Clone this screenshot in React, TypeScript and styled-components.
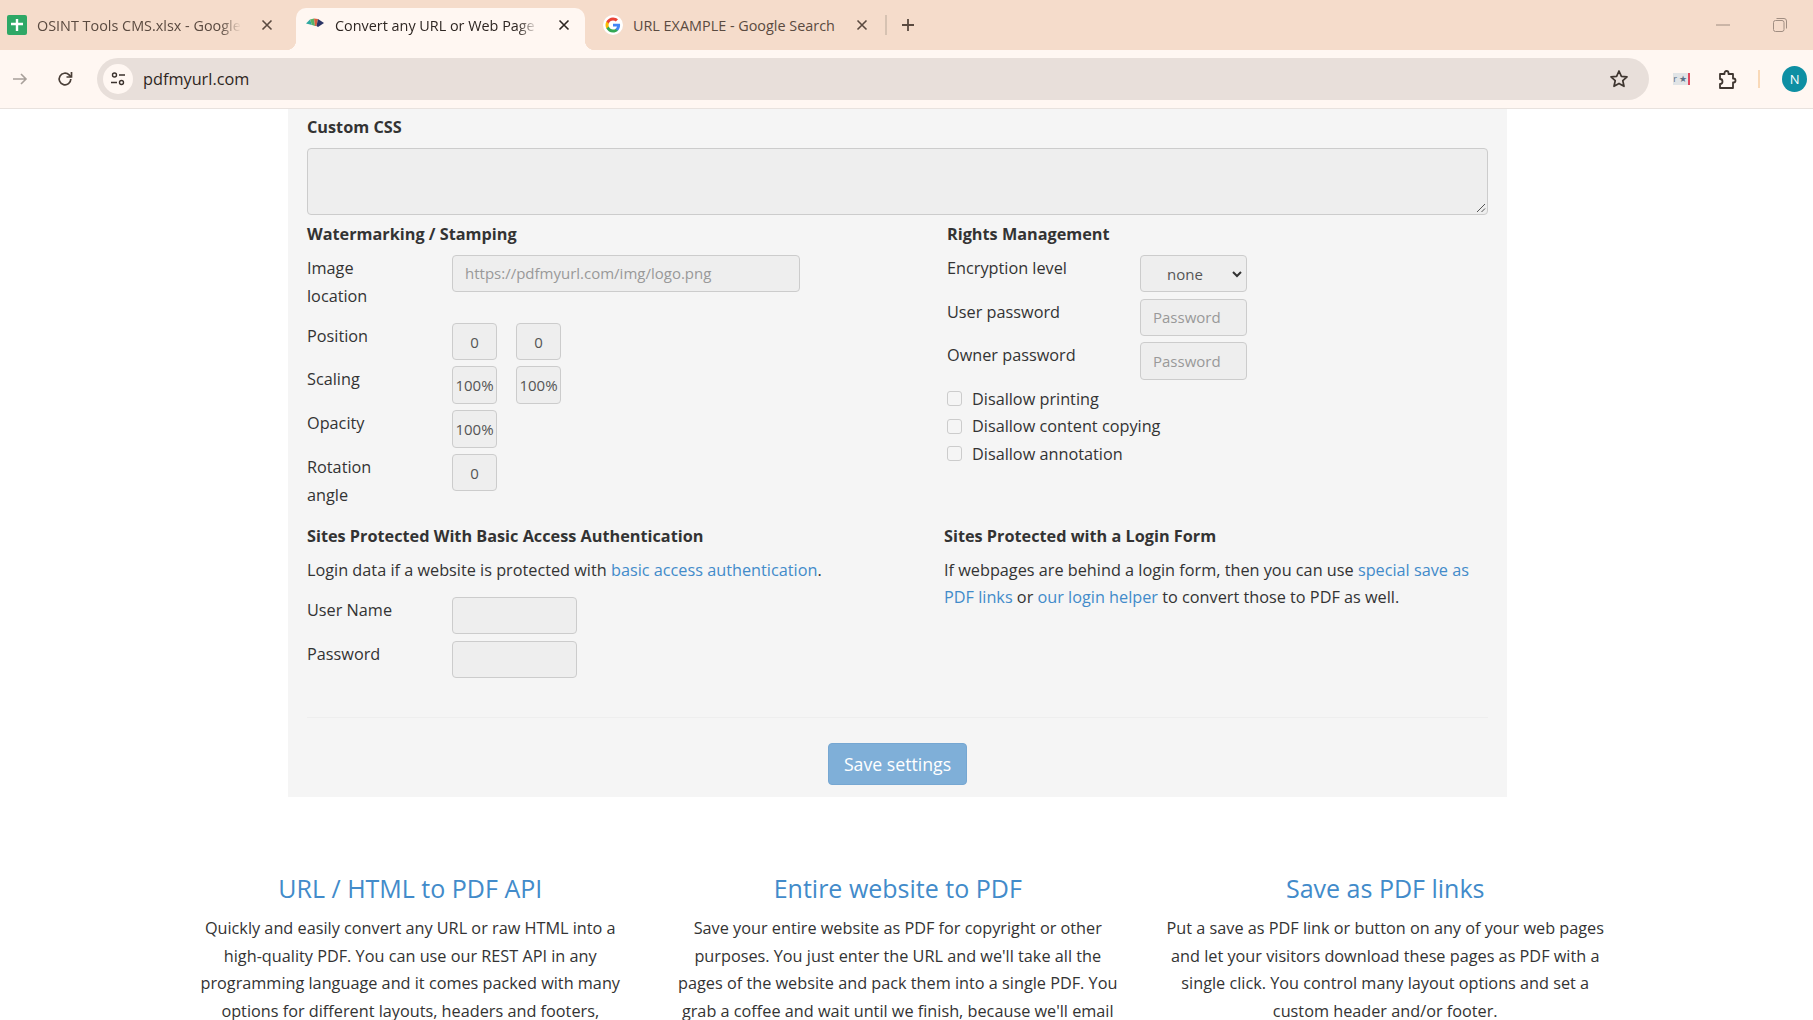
import React from "react";
import styled, { createGlobalStyle } from "styled-components";

const GlobalStyle = createGlobalStyle`
  html, body {
    margin: 0;
    padding: 0;
    height: 100%;
    overflow: hidden;
    background: #fff;
    font-family: "Open Sans", "Liberation Sans", sans-serif;
    color: #333;
  }
  * { box-sizing: border-box; }
`;

const blue = "#428bca";
const brown = "#5a4a40";
const tabBg = "#fff7f2";

const TabStrip = styled.div`
  display: flex;
  align-items: flex-end;
  height: 50px;
  background: #f5dccb;
  padding-left: 7px;
`;

const Tab = styled.div<{ $active?: boolean; $pl: number; $pr: number }>`
  position: relative;
  flex: none;
  display: flex;
  align-items: center;
  height: 42px;
  width: 289px;
  padding: 0 ${(p) => p.$pr}px 8px ${(p) => p.$pl}px;
  border-radius: 10px 10px 0 0;
  background: ${(p) => (p.$active ? tabBg : "transparent")};
  color: ${(p) => (p.$active ? "#2e2622" : brown)};
  font-size: 14.4px;
  &::before,
  &::after {
    content: ${(p) => (p.$active ? '""' : "none")};
    position: absolute;
    bottom: 0;
    width: 10px;
    height: 10px;
  }
  &::before {
    left: -10px;
    background: radial-gradient(circle at 0 0, transparent 10px, ${tabBg} 10.5px);
  }
  &::after {
    right: -10px;
    background: radial-gradient(circle at 100% 0, transparent 10px, ${tabBg} 10.5px);
  }
`;

const TabTitle = styled.span<{ $fade?: boolean }>`
  flex: 1;
  min-width: 0;
  margin-left: 10px;
  overflow: hidden;
  white-space: nowrap;
  ${(p) =>
    p.$fade
      ? `-webkit-mask-image: linear-gradient(90deg, #000 90%, transparent);
         mask-image: linear-gradient(90deg, #000 90%, transparent);`
      : ""}
`;

const TabClose = styled.svg`
  flex: none;
  width: 12px;
  height: 12px;
  margin-left: 20px;
`;

const StripDivider = styled.div`
  width: 2px;
  height: 20px;
  margin: 0 0 15px 11px;
  background: #d6c2b2;
`;

const NewTab = styled.svg`
  width: 14px;
  height: 14px;
  margin: 0 0 18px 14px;
`;

const WindowControls = styled.div`
  display: flex;
  align-items: center;
  gap: 43px;
  height: 50px;
  margin-left: auto;
  padding-right: 26px;
`;

const Toolbar = styled.div`
  display: flex;
  align-items: center;
  height: 59px;
  padding: 0 6px 1px 12px;
  background: ${tabBg};
  border-bottom: 1px solid #e8e2de;
`;

const ToolIcon = styled.svg<{ $gap?: number }>`
  flex: none;
  margin-right: ${(p) => p.$gap ?? 0}px;
`;

const Omnibox = styled.div`
  flex: none;
  display: flex;
  align-items: center;
  width: 1552px;
  height: 42px;
  margin-right: 24px;
  padding: 0 20px 0 6px;
  border-radius: 21px;
  background: #e8dfda;
  color: #2e2622;
  font-size: 16.3px;
`;

const SiteInfo = styled.div`
  display: flex;
  align-items: center;
  justify-content: center;
  width: 30px;
  height: 30px;
  margin-right: 10px;
  border-radius: 50%;
  background: ${tabBg};
`;

const OmniUrl = styled.span`
  flex: 1;
  padding-top: 1px;
`;

const ExtChip = styled.div`
  display: flex;
  align-items: center;
  justify-content: flex-end;
  gap: 2px;
  width: 18px;
  height: 12px;
  margin-right: 28px;
  padding-right: 1px;
  overflow: hidden;
  background: #e1e4e6;
  border-right: 2px solid #e0485f;
  color: #5b7187;
  font-size: 9px;
  line-height: 12px;
  white-space: nowrap;
`;

const ToolSep = styled.div`
  width: 2px;
  height: 18px;
  margin: 0 22px 0 20px;
  background: #f9d9b8;
`;

const Avatar = styled.div`
  display: flex;
  align-items: center;
  justify-content: center;
  width: 26px;
  height: 26px;
  border-radius: 50%;
  background: #0e8fa3;
  color: #fff;
  font-size: 13px;
`;

const Page = styled.main`
  height: 911px;
  overflow: hidden;
  background: #fff;
  font-size: 16.25px;
  line-height: 28px;
`;

const Panel = styled.section`
  width: 1219px;
  height: 688px;
  margin-left: 288px;
  padding: 4px 19px 0;
  background: #f5f5f5;
`;

const Heading = styled.div`
  font-weight: 700;
  font-size: 16.25px;
  line-height: 28px;
  color: #333;
`;

const CssBox = styled.div`
  position: relative;
  height: 67px;
  margin: 7px 0 5px;
  background: #eee;
  border: 1px solid #ccc;
  border-radius: 4px;
`;

const ResizeGrip = styled.svg`
  position: absolute;
  right: 1px;
  bottom: 1px;
  width: 10px;
  height: 10px;
`;

const TwoCols = styled.div`
  display: flex;
`;

const Col = styled.div<{ $width: number }>`
  flex: none;
  width: ${(p) => p.$width}px;
`;

const FormGroup = styled.div`
  margin-top: 6px;
`;

const FormRow = styled.div<{ $labelWidth: number; $mb: number }>`
  display: grid;
  grid-template-columns: ${(p) => p.$labelWidth}px 1fr;
  margin-bottom: ${(p) => p.$mb}px;
  align-items: start;
`;

const RowLabel = styled.div<{ $wrap?: boolean }>`
  max-width: ${(p) => (p.$wrap ? "90px" : "none")};
  color: #333;
`;

const Fields = styled.div`
  display: flex;
  gap: 19px;
`;

const Input = styled.div<{ $w: number; $h?: number; $left?: boolean; $muted?: boolean }>`
  display: flex;
  align-items: center;
  justify-content: ${(p) => (p.$left ? "flex-start" : "center")};
  width: ${(p) => p.$w}px;
  height: ${(p) => p.$h ?? 37}px;
  margin-top: 1px;
  padding: ${(p) => (p.$left ? "0 12px 1px" : "0")};
  background: #eee;
  border: 1px solid #ccc;
  border-radius: 4px;
  color: ${(p) => (p.$muted ? "#999" : "#555")};
  font-size: 15px;
  white-space: nowrap;
`;

const SelectBox = styled(Input)`
  justify-content: space-between;
  padding: 1px 3px 0 26px;
`;

const CheckRow = styled.div`
  display: flex;
  align-items: center;
  height: 27.500px;
  gap: 10px;
`;

const CheckBox = styled.span`
  width: 15px;
  height: 15px;
  background: #f5f5f5;
  border: 1px solid #ccc;
  border-radius: 3px;
`;

const Para = styled.p<{ $mb?: number }>`
  margin: 7px 0 ${(p) => p.$mb ?? 0}px;
  line-height: 27px;
`;

const Link = styled.a`
  color: ${blue};
`;

const Divider = styled.hr`
  margin: 39px 0 25px;
  border: 0;
  border-top: 1px solid #eee;
`;

const ButtonRow = styled.div`
  display: flex;
  justify-content: center;
`;

const SaveButton = styled.div`
  display: flex;
  align-items: center;
  justify-content: center;
  width: 139px;
  height: 42px;
  padding-bottom: 1px;
  background: #7fafd8;
  border: 1px solid #76a7d2;
  border-radius: 4px;
  color: #fff;
  font-size: 17.700px;
`;

const Features = styled.div`
  display: grid;
  grid-template-columns: repeat(3, 487.500px);
  margin: 74px 0 0 166.500px;
`;

const Feature = styled.div`
  padding: 0 22px;
  text-align: center;
`;

const FeatureTitle = styled.h2`
  margin: 0 0 10px;
  color: ${blue};
  font-size: 25px;
  font-weight: 400;
  line-height: 34px;
`;

const FeatureText = styled.p`
  margin: 0;
  line-height: 27.500px;
`;

const GoogleIcon = () => (
  <svg width="20" height="20" viewBox="0 0 48 48">
    <circle cx="24" cy="24" r="24" fill="#fff" />
    <path fill="#4285F4" d="M41 24.5c0-1.3-.1-2.4-.3-3.5H24v6.800h9.600c-.4 2.200-1.700 4-3.500 5.300v4.400h5.700C39.100 34.400 41 29.900 41 24.500z" />
    <path fill="#34A853" d="M24 42c4.800 0 8.800-1.600 11.800-4.300l-5.700-4.400c-1.600 1.100-3.600 1.700-6.100 1.700-4.600 0-8.600-3.100-10-7.300H8.100v4.600C11.100 37.900 17 42 24 42z" />
    <path fill="#FBBC05" d="M14 27.700c-.4-1.100-.6-2.400-.6-3.700s.2-2.600.6-3.700v-4.600H8.100C6.800 18.100 6 21 6 24s.8 5.900 2.100 8.300l5.900-4.600z" />
    <path fill="#EA4335" d="M24 13c2.600 0 5 .9 6.800 2.700l5.100-5.100C32.800 7.700 28.800 6 24 6 17 6 11.100 10.100 8.100 15.700l5.900 4.600c1.400-4.200 5.400-7.300 10-7.300z" />
  </svg>
);

const CloseGlyph = ({ color }: { color: string }) => (
  <TabClose viewBox="0 0 12 12">
    <path d="M1.500 1.500l9 9M10.500 1.500l-9 9" stroke={color} strokeWidth="1.600" fill="none" />
  </TabClose>
);

const rows = [
  { label: "Position", values: ["0", "0"], h: 37, mb: 5 },
  { label: "Scaling", values: ["100%", "100%"], h: 38, mb: 5 },
  { label: "Opacity", values: ["100%"], h: 38, mb: 5 },
];

export default function App() {
  return (
    <>
      <GlobalStyle />
      <TabStrip>
        <Tab $pl={0} $pr={23}>
          <svg width="20" height="20" viewBox="0 0 20 20">
            <rect width="20" height="20" rx="2" fill="#2ea866" />
            <path d="M4 9h12M10 4v12" stroke="#fff" strokeWidth="2.400" fill="none" />
          </svg>
          <TabTitle $fade>OSINT Tools CMS.xlsx - Google Sheets</TabTitle>
          <CloseGlyph color={brown} />
        </Tab>
        <Tab $active $pl={9} $pr={15}>
          <svg width="20" height="20" viewBox="0 0 20 20">
            <path d="M1 8.500L5 4.500L7 10z" fill="#2fa8a0" />
            <path d="M5 4.500L9 3.500L10 11L7 10z" fill="#58b368" />
            <path d="M9 3.500L13 4L11.500 11L10 11z" fill="#d9603f" />
            <path d="M13 4L19 8L13 12L11.500 11z" fill="#2c3566" />
          </svg>
          <TabTitle $fade>Convert any URL or Web Page to PDF</TabTitle>
          <CloseGlyph color="#2e2622" />
        </Tab>
        <Tab $pl={18} $pr={6}>
          <GoogleIcon />
          <TabTitle>URL EXAMPLE - Google Search</TabTitle>
          <CloseGlyph color={brown} />
        </Tab>
        <StripDivider />
        <NewTab viewBox="0 0 14 14">
          <path d="M7 1v12M1 7h12" stroke={brown} strokeWidth="1.800" fill="none" />
        </NewTab>
        <WindowControls>
          <svg width="14" height="14" viewBox="0 0 14 14">
            <path d="M0 7h14" stroke="#a08e82" strokeWidth="1" fill="none" />
          </svg>
          <svg width="14" height="14" viewBox="0 0 14 14">
            <rect x=".5" y="2.500" width="10.500" height="11" rx="2" stroke="#a08e82" fill="none" />
            <path d="M3.500.5h7.500a2.500 2.500 0 0 1 2.500 2.500v7.500" stroke="#a08e82" fill="none" />
          </svg>
        </WindowControls>
      </TabStrip>
      <Toolbar>
        <ToolIcon $gap={29} width="16" height="16" viewBox="0 0 16 16">
          <path d="M1 8h13M9 3l5 5-5 5" stroke="#a8a09a" strokeWidth="1.600" fill="none" />
        </ToolIcon>
        <ToolIcon $gap={24} width="16" height="16" viewBox="0 0 16 16">
          <path d="M13.800 8a5.800 5.800 0 1 1-1.700-4.100L14 5.800" stroke="#4a3f38" strokeWidth="1.700" fill="none" />
          <path d="M14.500 1v5h-5" stroke="#4a3f38" strokeWidth="1.700" fill="none" />
        </ToolIcon>
        <Omnibox>
          <SiteInfo>
            <svg width="16" height="16" viewBox="0 0 16 16">
              <circle cx="4.500" cy="4" r="2" stroke="#3b322d" strokeWidth="1.400" fill="none" />
              <path d="M9 4h6M1 11.500h6" stroke="#3b322d" strokeWidth="1.500" fill="none" />
              <circle cx="11.500" cy="11.500" r="2" stroke="#3b322d" strokeWidth="1.400" fill="none" />
            </svg>
          </SiteInfo>
          <OmniUrl>pdfmyurl.com</OmniUrl>
          <svg width="20" height="20" viewBox="0 0 20 20">
            <path d="M10 2l2.400 5.300 5.600.6-4.200 3.800 1.200 5.600L10 14.400l-5 2.900 1.200-5.600L2 7.900l5.600-.6z" stroke="#3f3630" strokeWidth="1.700" fill="none" strokeLinejoin="round" />
          </svg>
        </Omnibox>
        <ExtChip>r ★</ExtChip>
        <ToolIcon width="20" height="22" viewBox="0 0 20 22">
          <path d="M2 6h4.500V5a2 2 0 0 1 4 0v1H15v4.500h.5a2 2 0 0 1 0 4H15V20H2v-4a2.500 2.500 0 0 0 0-5z" stroke="#3f3630" strokeWidth="1.800" fill="none" strokeLinejoin="round" />
        </ToolIcon>
        <ToolSep />
        <Avatar>N</Avatar>
      </Toolbar>
      <Page>
        <Panel>
          <Heading>Custom CSS</Heading>
          <CssBox>
            <ResizeGrip viewBox="0 0 10 10">
              <path d="M1 9l8-8M5.500 9l3.500-3.500" stroke="#555" strokeWidth="1" fill="none" />
            </ResizeGrip>
          </CssBox>
          <TwoCols>
            <Col $width={640}>
              <Heading>Watermarking / Stamping</Heading>
              <FormGroup>
                <FormRow $labelWidth={145} $mb={12}>
                  <RowLabel $wrap>Image location</RowLabel>
                  <Input $w={348} $left $muted>https://pdfmyurl.com/img/logo.png</Input>
                </FormRow>
                {rows.map((r) => (
                  <FormRow key={r.label} $labelWidth={145} $mb={r.mb}>
                    <RowLabel>{r.label}</RowLabel>
                    <Fields>
                      {r.values.map((v, i) => (
                        <Input key={i} $w={45} $h={r.h}>{v}</Input>
                      ))}
                    </Fields>
                  </FormRow>
                ))}
                <FormRow $labelWidth={145} $mb={13}>
                  <RowLabel $wrap>Rotation angle</RowLabel>
                  <Input $w={45}>0</Input>
                </FormRow>
              </FormGroup>
            </Col>
            <Col $width={540}>
              <Heading>Rights Management</Heading>
              <FormGroup>
                <FormRow $labelWidth={193} $mb={6}>
                  <RowLabel>Encryption level</RowLabel>
                  <SelectBox $w={107}>
                    none
                    <svg width="12" height="12" viewBox="0 0 12 12">
                      <path d="M2 4l4 4 4-4" stroke="#333" strokeWidth="2" fill="none" />
                    </svg>
                  </SelectBox>
                </FormRow>
                <FormRow $labelWidth={193} $mb={5}>
                  <RowLabel>User password</RowLabel>
                  <Input $w={107} $left $muted>Password</Input>
                </FormRow>
                <FormRow $labelWidth={193} $mb={5}>
                  <RowLabel>Owner password</RowLabel>
                  <Input $w={107} $h={38} $left $muted>Password</Input>
                </FormRow>
              </FormGroup>
              <CheckRow><CheckBox />Disallow printing</CheckRow>
              <CheckRow><CheckBox />Disallow content copying</CheckRow>
              <CheckRow><CheckBox />Disallow annotation</CheckRow>
            </Col>
          </TwoCols>
          <TwoCols>
            <Col $width={637}>
              <Heading>Sites Protected With Basic Access Authentication</Heading>
              <Para $mb={12}>
                Login data if a website is protected with <Link>basic access authentication</Link>.
              </Para>
              <FormRow $labelWidth={145} $mb={6}>
                <RowLabel>User Name</RowLabel>
                <Input $w={125} />
              </FormRow>
              <FormRow $labelWidth={145} $mb={0}>
                <RowLabel>Password</RowLabel>
                <Input $w={125} />
              </FormRow>
            </Col>
            <Col $width={544}>
              <Heading>Sites Protected with a Login Form</Heading>
              <Para>
                If webpages are behind a login form, then you can use <Link>special save as PDF links</Link> or{" "}
                <Link>our login helper</Link> to convert those to PDF as well.
              </Para>
            </Col>
          </TwoCols>
          <Divider />
          <ButtonRow>
            <SaveButton>Save settings</SaveButton>
          </ButtonRow>
        </Panel>
        <Features>
          <Feature>
            <FeatureTitle>URL / HTML to PDF API</FeatureTitle>
            <FeatureText>
              Quickly and easily convert any URL or raw HTML into a high-quality PDF. You can use our REST API in any programming language and it comes packed with many options for different layouts, headers and footers,
            </FeatureText>
          </Feature>
          <Feature>
            <FeatureTitle>Entire website to PDF</FeatureTitle>
            <FeatureText>
              Save your entire website as PDF for copyright or other purposes. You just enter the URL and we'll take all the pages of the website and pack them into a single PDF. You grab a coffee and wait until we finish, because we'll email
            </FeatureText>
          </Feature>
          <Feature>
            <FeatureTitle>Save as PDF links</FeatureTitle>
            <FeatureText>
              Put a save as PDF link or button on any of your web pages and let your visitors download these pages as PDF with a single click. You control many layout options and set a custom header and/or footer.
            </FeatureText>
          </Feature>
        </Features>
      </Page>
    </>
  );
}
